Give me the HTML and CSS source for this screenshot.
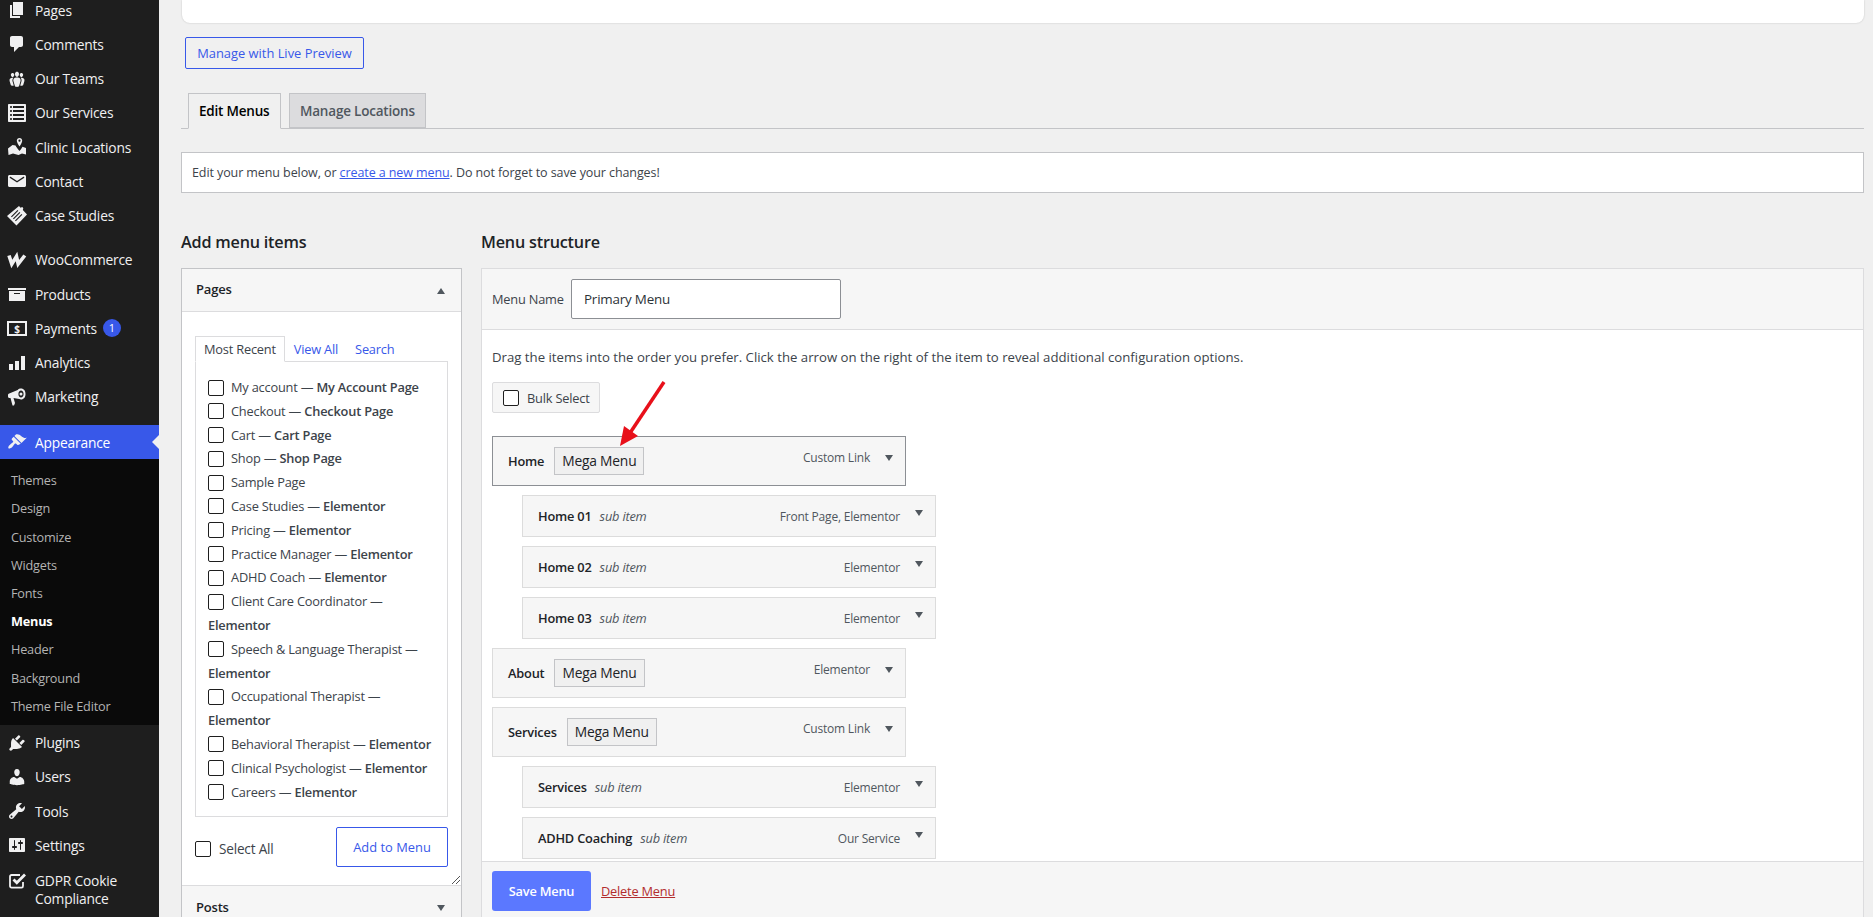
FILE: index.html
```html
<!DOCTYPE html>
<html lang="en">
<head>
    <meta charset="UTF-8">
    <title>Menus</title>
    <link rel="stylesheet" href="styles.css">
</head>
<body>
    <nav class="sidebar">
        <ul class="side-menu">
            <li><svg viewBox="0 0 20 20"><path d="M6 15V2h10v13H6zm-1 1h8v2H3V5h2v11z"/></svg>Pages</li>
            <li><svg viewBox="0 0 20 20"><path d="M5 2h9c1.1 0 2 .9 2 2v7c0 1.1-.9 2-2 2h-2l-5 5v-5H5c-1.1 0-2-.9-2-2V4c0-1.1.9-2 2-2z"/></svg>Comments</li>
            <li><svg viewBox="0 0 20 20"><path d="M8.03 4.46c-.29 1.28.55 3.46 1.97 3.46 1.41 0 2.25-2.18 1.96-3.46-.22-.98-1.08-1.63-1.96-1.63-.89 0-1.74.65-1.97 1.63zm-4.13.9c-.25 1.08.47 2.93 1.67 2.93s1.92-1.85 1.67-2.93c-.19-.83-.92-1.39-1.67-1.39s-1.48.56-1.67 1.39zm8.86 0c-.25 1.08.47 2.93 1.66 2.93 1.2 0 1.92-1.85 1.67-2.93-.19-.83-.92-1.39-1.67-1.39-.74 0-1.47.56-1.66 1.39zm-.59 11.43l1.25-4.3C14.2 10 12.71 8.47 10 8.47c-2.72 0-4.21 1.53-3.44 4.02l1.26 4.3C8.05 17.51 9 18 10 18c.98 0 1.94-.49 2.17-1.21zm-6.1-7.63c-.49.67-.96 1.83-.42 3.59l1.12 3.79c-.34.2-.77.31-1.2.31-.85 0-1.65-.41-1.85-1.03l-1.07-3.65c-.65-2.11.61-3.4 2.92-3.4.27 0 .54.02.79.06-.1.1-.2.22-.29.33zm8.35-.39c2.31 0 3.58 1.29 2.92 3.4l-1.07 3.65c-.2.62-1 1.03-1.85 1.03-.43 0-.86-.11-1.2-.31l1.11-3.77c.55-1.78.08-2.94-.42-3.61-.08-.11-.18-.23-.28-.33.25-.04.51-.06.79-.06z"/></svg>Our Teams</li>
            <li><svg viewBox="0 0 20 20"><path d="M2 19h16c.55 0 1-.45 1-1V2c0-.55-.45-1-1-1H2c-.55 0-1 .45-1 1v16c0 .55.45 1 1 1zM4 3c.55 0 1 .45 1 1s-.45 1-1 1-1-.45-1-1 .45-1 1-1zm13 0v2H6V3h11zM4 7c.55 0 1 .45 1 1s-.45 1-1 1-1-.45-1-1 .45-1 1-1zm13 0v2H6V7h11zM4 11c.55 0 1 .45 1 1s-.45 1-1 1-1-.45-1-1 .45-1 1-1zm13 0v2H6v-2h11zM4 15c.55 0 1 .45 1 1s-.45 1-1 1-1-.45-1-1 .45-1 1-1zm13 0v2H6v-2h11z"/></svg>Our Services</li>
            <li><svg viewBox="0 0 20 20"><path fill-rule="evenodd" d="M12.500 1C10.900 1 9.800 2.200 9.800 3.700c0 1.500 1.800 4.500 2.700 5.800.9-1.300 2.700-4.300 2.700-5.800C15.200 2.200 14.100 1 12.500 1zm0 1.600a1.100 1.100 0 1 1 0 2.200 1.100 1.100 0 0 1 0-2.200z"/><path d="M1 11.500L5.500 8l3 .5c.8 1.500 2.200 3.500 4 5.500 1.200-1.300 2.200-2.800 3-4.200l3.500 1.200v6.500l-4-1-3.500 1.500-5.500-1.500-4.500 1.500z"/></svg>Clinic Locations</li>
            <li><svg viewBox="0 0 20 20"><path d="M2.500 4h15c.8 0 1.500.7 1.500 1.500v9c0 .8-.7 1.500-1.500 1.500h-15C1.700 16 1 15.300 1 14.500v-9C1 4.700 1.700 4 2.500 4zm.6 1.800c-.6.300-.4.900-.1 1.100l7 4.700 7-4.700c.3-.2.500-.8-.1-1.100-.3-.1-.6-.1-.9.100l-6 4-6-4c-.3-.2-.6-.2-.9-.1z"/></svg>Contact</li>
            <li><svg viewBox="0 0 20 20"><path fill-rule="evenodd" d="M12 0l1.500 1.800L15.300 1l1 1.200-.5 1.800L20 8.500 9.500 19.500 0 10zM10.500 4L4 10.500l.8.8 6.500-6.500zm2 2L6 12.500l.8.8 6.500-6.500zm2 2L8 14.500l.8.8 6.500-6.500z"/></svg>Case Studies</li>
            <li class="gap"><svg viewBox="0 0 20 20"><path d="M2 5.500L4.800 14 9.500 6.500 11.200 14 17.800 5.500" fill="none" stroke="#f0f0f1" stroke-width="3.600"/></svg>WooCommerce</li>
            <li><svg viewBox="0 0 20 20"><path d="M19 4v2H1V4h18zM2 7h16v10H2V7zm11 3V9H7v1h6z"/></svg>Products</li>
            <li><svg class="pay" viewBox="0 0 20 20"><rect x="1" y="4" width="18" height="13" fill="none" stroke="#f0f0f1" stroke-width="2"/><text x="10" y="14.500" text-anchor="middle">$</text></svg><span>Payments</span><span class="badge">1</span></li>
            <li><svg viewBox="0 0 20 20"><path d="M2 11h4v6H2zM8 8h4v9H8zM14 3h4v14h-4z"/></svg>Analytics</li>
            <li><svg viewBox="0 0 20 20"><path fill-rule="evenodd" d="M14 1.500c2.800 0 4.500 2.300 4.500 5.500s-1.700 5.500-4.500 5.500c-.7 0-1.300-.2-1.800-.4L6.500 11l1.500 5-1 2.500H5.500L3.500 11H2.500C1.600 11 1 10.200 1 9.200V8c0-.8.500-1.300 1.200-1.500l8.500-3.600c.8-.9 2-1.400 3.300-1.400zm0 2c-1.400 0-2.600 1.400-2.600 3.500s1.200 3.500 2.600 3.500 2.600-1.400 2.600-3.500-1.200-3.500-2.600-3.500zm0 2a1.500 1.500 0 1 1 0 3 1.500 1.500 0 0 1 0-3z"/></svg>Marketing</li>
            <li class="gap current"><svg viewBox="0 0 20 20"><path d="M14.480 11.060L7.410 3.990l1.500-1.500c.5-.56 2.300-.47 3.510.32 1.210.8 1.430 1.280 2.910 2.100 1.180.64 2.450 1.260 4.450.85zm-.71.71L6.700 4.700 4.930 6.470c-.39.39-.39 1.020 0 1.410l1.060 1.060c.39.39.39 1.030 0 1.420-.6.6-1.430 1.110-2.210 1.690-.35.26-.7.53-1.010.84C1.430 13.710.96 15.650 1.500 16.200c.54.55 2.490.08 3.750-1.280.31-.31.58-.66.84-1.010.58-.78 1.090-1.610 1.690-2.210.39-.39 1.020-.39 1.410 0l1.060 1.060c.39.39 1.020.39 1.410 0z"/></svg>Appearance</li>
        </ul>
        <ul class="sub-menu">
            <li>Themes</li>
            <li>Design</li>
            <li>Customize</li>
            <li>Widgets</li>
            <li>Fonts</li>
            <li class="active">Menus</li>
            <li>Header</li>
            <li>Background</li>
            <li>Theme File Editor</li>
        </ul>
        <ul class="side-menu">
            <li><svg viewBox="0 0 20 20"><path d="M13.110 4.360L9.870 7.600 8 5.730l3.240-3.240c.35-.34 1.050-.2 1.560.32.52.51.66 1.210.31 1.550zm-8 1.770l.91-1.120 9.010 9.010-1.190.84c-.71.71-2.630 1.160-3.820 1.160H6.140L4.900 17.260c-.59.59-1.540.59-2.120 0-.59-.58-.59-1.530 0-2.120l1.240-1.240v-3.880c0-1.130.4-3.190 1.090-3.890zm7.260 3.970l3.240-3.240c.34-.35 1.040-.21 1.550.31.52.51.66 1.210.31 1.550l-3.240 3.250z"/></svg>Plugins</li>
            <li><svg viewBox="0 0 20 20"><path d="M10 9.250c-2.270 0-2.730-3.440-2.730-3.440C7 4.020 7.820 2 9.970 2c2.160 0 2.980 2.020 2.710 3.810 0 0-.41 3.440-2.680 3.440zm0 2.570L12.720 10c2.390 0 4.520 2.330 4.520 4.530v2.490s-3.650 1.130-7.240 1.130c-3.650 0-7.240-1.130-7.240-1.130v-2.490c0-2.250 1.940-4.480 4.470-4.480z"/></svg>Users</li>
            <li><svg viewBox="0 0 20 20"><path d="M16.680 9.770c-1.340 1.340-3.300 1.670-4.950.99l-5.410 6.520c-.99.99-2.590.99-3.580 0s-.99-2.590 0-3.570l6.520-5.420c-.68-1.650-.35-3.610.99-4.950 1.280-1.280 3.120-1.620 4.720-1.060l-2.890 2.890 2.820 2.820 2.860-2.870c.53 1.580.18 3.390-1.080 4.650zM3.810 16.210c.4.39 1.040.39 1.430 0 .4-.4.4-1.040 0-1.430-.39-.4-1.030-.4-1.430 0-.39.39-.39 1.030 0 1.430z"/></svg>Tools</li>
            <li><svg viewBox="0 0 20 20"><path d="M18 16V4c0-.55-.45-1-1-1H3c-.55 0-1 .45-1 1v12c0 .55.45 1 1 1h14c.55 0 1-.45 1-1zM8 11h1c.55 0 1 .45 1 1s-.45 1-1 1H8v1.500c0 .28-.22.5-.5.5s-.5-.22-.5-.5V13H6c-.55 0-1-.45-1-1s.45-1 1-1h1V5.500c0-.28.22-.5.5-.5s.5.22.5.5V11zm5-2h-1c-.55 0-1-.45-1-1s.45-1 1-1h1V5.500c0-.28.22-.5.5-.5s.5.22.5.5V7h1c.55 0 1 .45 1 1s-.45 1-1 1h-1v5.500c0 .28-.22.5-.5.5s-.5-.22-.5-.5V9z"/></svg>Settings</li>
            <li class="two-line"><svg class="gdpr" viewBox="0 0 20 20"><path d="M16 11v4c0 1-.7 1.600-1.500 1.600h-10C3.700 16.600 3 16 3 15V5.500C3 4.700 3.700 4 4.500 4H13" fill="none" stroke="#f0f0f1" stroke-width="1.800"/><path d="M6.500 8.500l3.300 3.300L18 3.500" fill="none" stroke="#f0f0f1" stroke-width="2.800"/></svg>GDPR Cookie Compliance</li>
        </ul>
    </nav>

    <main class="content">
        <div class="top-card"></div>
        <a class="button live-preview">Manage with Live Preview</a>

        <div class="nav-tabs">
            <a class="nav-tab active">Edit Menus</a>
            <a class="nav-tab">Manage Locations</a>
        </div>

        <div class="notice">Edit your menu below, or <a>create a new menu</a>. Do not forget to save your changes!</div>

        <div class="columns">
            <section class="col-left">
                <h2>Add menu items</h2>
                <div class="accordion">
                    <div class="acc-title">Pages <i class="caret up"></i></div>
                    <div class="acc-body">
                        <div class="tabs">
                            <span class="tab active">Most Recent</span>
                            <span class="tab">View All</span>
                            <span class="tab">Search</span>
                        </div>
                        <div class="checklist">
                            <label><input type="checkbox">My account — <b>My Account Page</b></label>
                            <label><input type="checkbox">Checkout — <b>Checkout Page</b></label>
                            <label><input type="checkbox">Cart — <b>Cart Page</b></label>
                            <label><input type="checkbox">Shop — <b>Shop Page</b></label>
                            <label><input type="checkbox">Sample Page</label>
                            <label><input type="checkbox">Case Studies — <b>Elementor</b></label>
                            <label><input type="checkbox">Pricing — <b>Elementor</b></label>
                            <label><input type="checkbox">Practice Manager — <b>Elementor</b></label>
                            <label><input type="checkbox">ADHD Coach — <b>Elementor</b></label>
                            <label><input type="checkbox">Client Care Coordinator —<br><b>Elementor</b></label>
                            <label><input type="checkbox">Speech &amp; Language Therapist —<br><b>Elementor</b></label>
                            <label><input type="checkbox">Occupational Therapist —<br><b>Elementor</b></label>
                            <label><input type="checkbox">Behavioral Therapist — <b>Elementor</b></label>
                            <label><input type="checkbox">Clinical Psychologist — <b>Elementor</b></label>
                            <label><input type="checkbox">Careers — <b>Elementor</b></label>
                        </div>
                        <div class="add-row">
                            <label class="select-all"><input type="checkbox">Select All</label>
                            <a class="button add-btn">Add to Menu</a>
                        </div>
                        <svg class="grip" viewBox="0 0 8 8"><path d="M0 8L8 0M4 8L8 4" stroke="#555" fill="none"/></svg>
                    </div>
                    <div class="acc-title closed">Posts <i class="caret"></i></div>
                </div>
            </section>

            <section class="col-right">
                <h2>Menu structure</h2>
                <div class="menu-edit">
                    <div class="menu-header">
                        <span class="name-label">Menu Name</span>
                        <input class="name-input" type="text" value="Primary Menu">
                    </div>
                    <div class="menu-body">
                        <p class="hint">Drag the items into the order you prefer. Click the arrow on the right of the item to reveal additional configuration options.</p>
                        <label class="bulk"><input type="checkbox">Bulk Select</label>

                        <div class="item top dark"><span class="title">Home</span><span class="chip">Mega Menu</span><span class="type">Custom Link</span><i class="caret"></i></div>
                        <div class="item sub"><span class="title">Home 01</span><em>sub item</em><span class="type">Front Page, Elementor</span><i class="caret"></i></div>
                        <div class="item sub"><span class="title">Home 02</span><em>sub item</em><span class="type">Elementor</span><i class="caret"></i></div>
                        <div class="item sub"><span class="title">Home 03</span><em>sub item</em><span class="type">Elementor</span><i class="caret"></i></div>
                        <div class="item top"><span class="title">About</span><span class="chip">Mega Menu</span><span class="type">Elementor</span><i class="caret"></i></div>
                        <div class="item top"><span class="title">Services</span><span class="chip">Mega Menu</span><span class="type">Custom Link</span><i class="caret"></i></div>
                        <div class="item sub"><span class="title">Services</span><em>sub item</em><span class="type">Elementor</span><i class="caret"></i></div>
                        <div class="item sub"><span class="title">ADHD Coaching</span><em>sub item</em><span class="type">Our Service</span><i class="caret"></i></div>

                        <svg class="red-arrow" viewBox="0 0 60 80"><path d="M50 2L14 56" stroke="#e8101a" stroke-width="3.500" fill="none"/><path d="M6 66L10 46 24 56z" fill="#e8101a"/></svg>
                    </div>
                    <div class="menu-footer">
                        <a class="save-btn">Save Menu</a>
                        <a class="delete-link">Delete Menu</a>
                    </div>
                </div>
            </section>
        </div>
    </main>
</body>
</html>
```

FILE: styles.css
```css
html, body {
    height: 917px;
    overflow: hidden;
}

body {
    margin: 0;
    display: flex;
    align-items: flex-start;
    background-color: #f0f0f0;
    font-family: "Open Sans", "Noto Sans", sans-serif;
    font-size: 12.8px;
    letter-spacing: -0.2px;
    color: #3c434a;
}

ul {
    list-style: none;
    margin: 0;
    padding: 0;
}

/* sidebar */
.sidebar {
    width: 159px;
    height: 924px;
    margin-top: -7px;
    flex-shrink: 0;
    background-color: #1e1e1e;
    color: #f0f0f1;
}

.side-menu li {
    position: relative;
    display: flex;
    align-items: center;
    height: 34.25px;
    padding-left: 7px;
    font-size: 13.8px;
}

.side-menu li svg {
    width: 20px;
    height: 20px;
    margin-right: 8px;
    flex-shrink: 0;
    fill: #f0f0f1;
}

.side-menu li.gap {
    margin-top: 10px;
}

.side-menu li.current {
    margin-top: 11px;
    background-color: #3858e9;
    color: #fff;
}

.side-menu li.current::after {
    content: "";
    position: absolute;
    right: 0;
    top: 10px;
    border: 7px solid transparent;
    border-right-color: #f0f0f1;
    border-left-width: 0;
}

.side-menu li.two-line {
    align-items: flex-start;
    width: 132px;
    line-height: 18px;
    padding-top: 10px;
    height: auto;
}

.side-menu li.two-line svg {
    margin-top: -1px;
}

.side-menu .pay text {
    font-size: 10px;
    font-weight: 700;
    fill: #f0f0f1;
    letter-spacing: 0;
}

.badge {
    width: 18px;
    height: 18px;
    margin-left: 6px;
    border-radius: 50%;
    background-color: #3858e9;
    color: #fff;
    font-size: 11px;
    line-height: 18px;
    text-align: center;
}

.sub-menu {
    padding: 7px 0 5.5px;
    background-color: #0a0a0a;
    color: #b4b4b4;
}

.sub-menu li {
    height: 28.2px;
    line-height: 28.2px;
    padding-left: 11px;
    font-size: 12.7px;
}

.sub-menu li.active {
    color: #fff;
    font-weight: 700;
}

/* main column */
.content {
    flex: 1;
    min-width: 0;
    padding: 0 9px 0 22px;
}

.top-card {
    height: 23px;
    margin-left: 1px;
    background-color: #fff;
    border-radius: 0 0 8px 8px;
    box-shadow: 0 0 2px rgba(0, 0, 0, 0.2);
}

.button {
    display: inline-block;
    box-sizing: border-box;
    border: 1px solid #3858e9;
    border-radius: 2px;
    color: #3858e9;
    font-size: 12.9px;
    font-weight: 500;
    letter-spacing: 0;
}

.live-preview {
    display: block;
    width: 179px;
    height: 32px;
    margin: 14px 0 0 4px;
    line-height: 30px;
    text-align: center;
}

.nav-tabs {
    display: flex;
    gap: 8px;
    height: 35px;
    margin-top: 24px;
    padding-left: 7px;
    border-bottom: 1px solid #c3c4c7;
}

.nav-tab {
    height: 35px;
    box-sizing: border-box;
    padding: 0 10.5px;
    border: 1px solid #c3c4c7;
    background-color: #dcdcde;
    color: #50575e;
    font-size: 13.5px;
    font-weight: 600;
    line-height: 35px;
}

.nav-tab.active {
    height: 36px;
    padding: 0 10px;
    border-bottom-color: #f0f0f0;
    background-color: #f0f0f0;
    color: #000;
}

.notice {
    box-sizing: border-box;
    height: 41px;
    margin-top: 23px;
    padding-left: 10px;
    border: 1px solid #c3c4c7;
    background-color: #fff;
    font-size: 12.5px;
    letter-spacing: -0.09px;
    line-height: 39px;
}

.notice a {
    color: #3858e9;
    text-decoration: underline;
}

.columns {
    display: flex;
    gap: 19px;
}

h2 {
    margin: 0;
    height: 75px;
    padding-top: 38px;
    box-sizing: border-box;
    color: #1d2327;
    font-size: 16.2px;
    font-weight: 600;
    line-height: 22px;
}

/* add menu items */
.col-left {
    width: 281px;
    flex-shrink: 0;
}

.accordion {
    border: 1px solid #c3c4c7;
    background-color: #fff;
}

.acc-title {
    position: relative;
    box-sizing: border-box;
    height: 43px;
    padding-left: 14px;
    border-bottom: 1px solid #dcdcde;
    background-color: #f6f6f6;
    color: #1d2327;
    font-size: 13px;
    font-weight: 600;
    line-height: 41px;
}

.acc-title.closed {
    height: 46px;
    border-bottom: 0;
    line-height: 43px;
}

.acc-title .caret {
    position: absolute;
    right: 16px;
    top: 19px;
}

.acc-body {
    position: relative;
    height: 574px;
    box-sizing: border-box;
    padding: 24px 13px 0;
    border-bottom: 1px solid #dcdcde;
}

.tabs {
    display: flex;
    height: 25px;
    line-height: 26px;
    color: #3858e9;
}

.tab {
    padding: 0 8px;
    margin-right: 1px;
}

.tab.active {
    position: relative;
    z-index: 1;
    box-sizing: border-box;
    height: 26px;
    border: 1px solid #dcdcde;
    border-bottom-color: #fff;
    color: #3c434a;
    line-height: 25px;
}

.checklist {
    box-sizing: border-box;
    height: 456px;
    padding: 14px 12px 0;
    border: 1px solid #dcdcde;
    white-space: nowrap;
}

.checklist label {
    display: block;
    line-height: 23.8px;
}

.checklist b {
    font-weight: 600;
}

input[type="checkbox"] {
    appearance: none;
    width: 16px;
    height: 16px;
    margin: 0 7px 0 0;
    box-sizing: border-box;
    border: 1px solid #1e1e1e;
    border-radius: 2px;
    background-color: #fff;
    vertical-align: -3.5px;
}

.add-row {
    display: flex;
    align-items: center;
    justify-content: space-between;
    margin-top: 10px;
}

.select-all {
    padding-top: 2px;
    font-size: 13.6px;
}

.select-all input {
    margin-right: 8px;
}

.add-btn {
    width: 112px;
    height: 40px;
    line-height: 38px;
    text-align: center;
}

.grip {
    position: absolute;
    right: 1px;
    bottom: 1px;
    width: 8px;
    height: 8px;
}

.caret {
    display: inline-block;
    width: 0;
    height: 0;
    border-style: solid;
    border-width: 6px 4px 0;
    border-color: #50575e transparent transparent;
}

.caret.up {
    border-width: 0 4px 6px;
    border-color: transparent transparent #50575e;
}

/* menu structure */
.col-right {
    flex: 1;
    min-width: 0;
}

.menu-edit {
    border: 1px solid #dcdcde;
    background-color: #fff;
}

.menu-header {
    display: flex;
    align-items: center;
    box-sizing: border-box;
    height: 61px;
    padding-left: 10px;
    border-bottom: 1px solid #dcdcde;
    background-color: #f6f6f6;
}

.name-label {
    width: 79px;
}

.name-input {
    box-sizing: border-box;
    width: 270px;
    height: 40px;
    padding: 0 12px;
    border: 1px solid #8c8f94;
    border-radius: 2px;
    color: #2c3338;
    font-family: inherit;
    font-size: 13.4px;
    letter-spacing: -0.2px;
}

.menu-body {
    position: relative;
    box-sizing: border-box;
    height: 531px;
    padding: 0 10px;
    overflow: hidden;
}

.hint {
    margin: 0;
    padding-top: 18px;
    font-size: 13.2px;
    letter-spacing: 0;
    line-height: 18px;
}

.bulk {
    display: flex;
    align-items: center;
    box-sizing: border-box;
    width: 108px;
    height: 31px;
    margin: 16px 0 23px;
    padding-left: 10px;
    border: 1px solid #dcdcde;
    border-radius: 2px;
    background-color: #f6f6f6;
}

.bulk input {
    margin-right: 8px;
}

.item {
    display: flex;
    align-items: center;
    box-sizing: border-box;
    width: 414px;
    margin-bottom: 9px;
    border: 1px solid #dcdcdc;
    background-color: #f6f6f6;
    padding: 0 11px 0 15px;
}

.item.top {
    height: 50px;
}

.item.dark {
    border-color: #8c8f94;
}

.item.sub {
    height: 42px;
    margin-left: 30px;
}

.item .title {
    color: #1d2327;
    font-weight: 600;
}

.item.top .title {
    margin-right: 10px;
}

.item em {
    margin-left: 8px;
    color: #50575e;
}

.chip {
    padding: 0 7px;
    height: 28px;
    box-sizing: border-box;
    border: 1px solid #c3c4c7;
    background-color: #f0f0f0;
    color: #1d2327;
    font-size: 13.8px;
    line-height: 26px;
}

.type {
    margin-left: auto;
    color: #50575e;
    font-size: 12px;
}

.item.top .type {
    position: relative;
    top: -4px;
}

.item .caret {
    position: relative;
    top: -3px;
    margin-left: 15px;
    margin-right: 1px;
}

.red-arrow {
    position: absolute;
    left: 132px;
    top: 50px;
    width: 60px;
    height: 80px;
}

.menu-footer {
    display: flex;
    align-items: center;
    gap: 10px;
    box-sizing: border-box;
    height: 62px;
    padding: 0 10px 4px;
    border-top: 1px solid #dcdcde;
    background-color: #f6f6f6;
}

.save-btn {
    width: 99px;
    height: 40px;
    border-radius: 3px;
    background-color: #5b78ff;
    color: #fff;
    font-weight: 600;
    line-height: 40px;
    text-align: center;
}

.delete-link {
    color: #b32d2e;
    text-decoration: underline;
}
```
